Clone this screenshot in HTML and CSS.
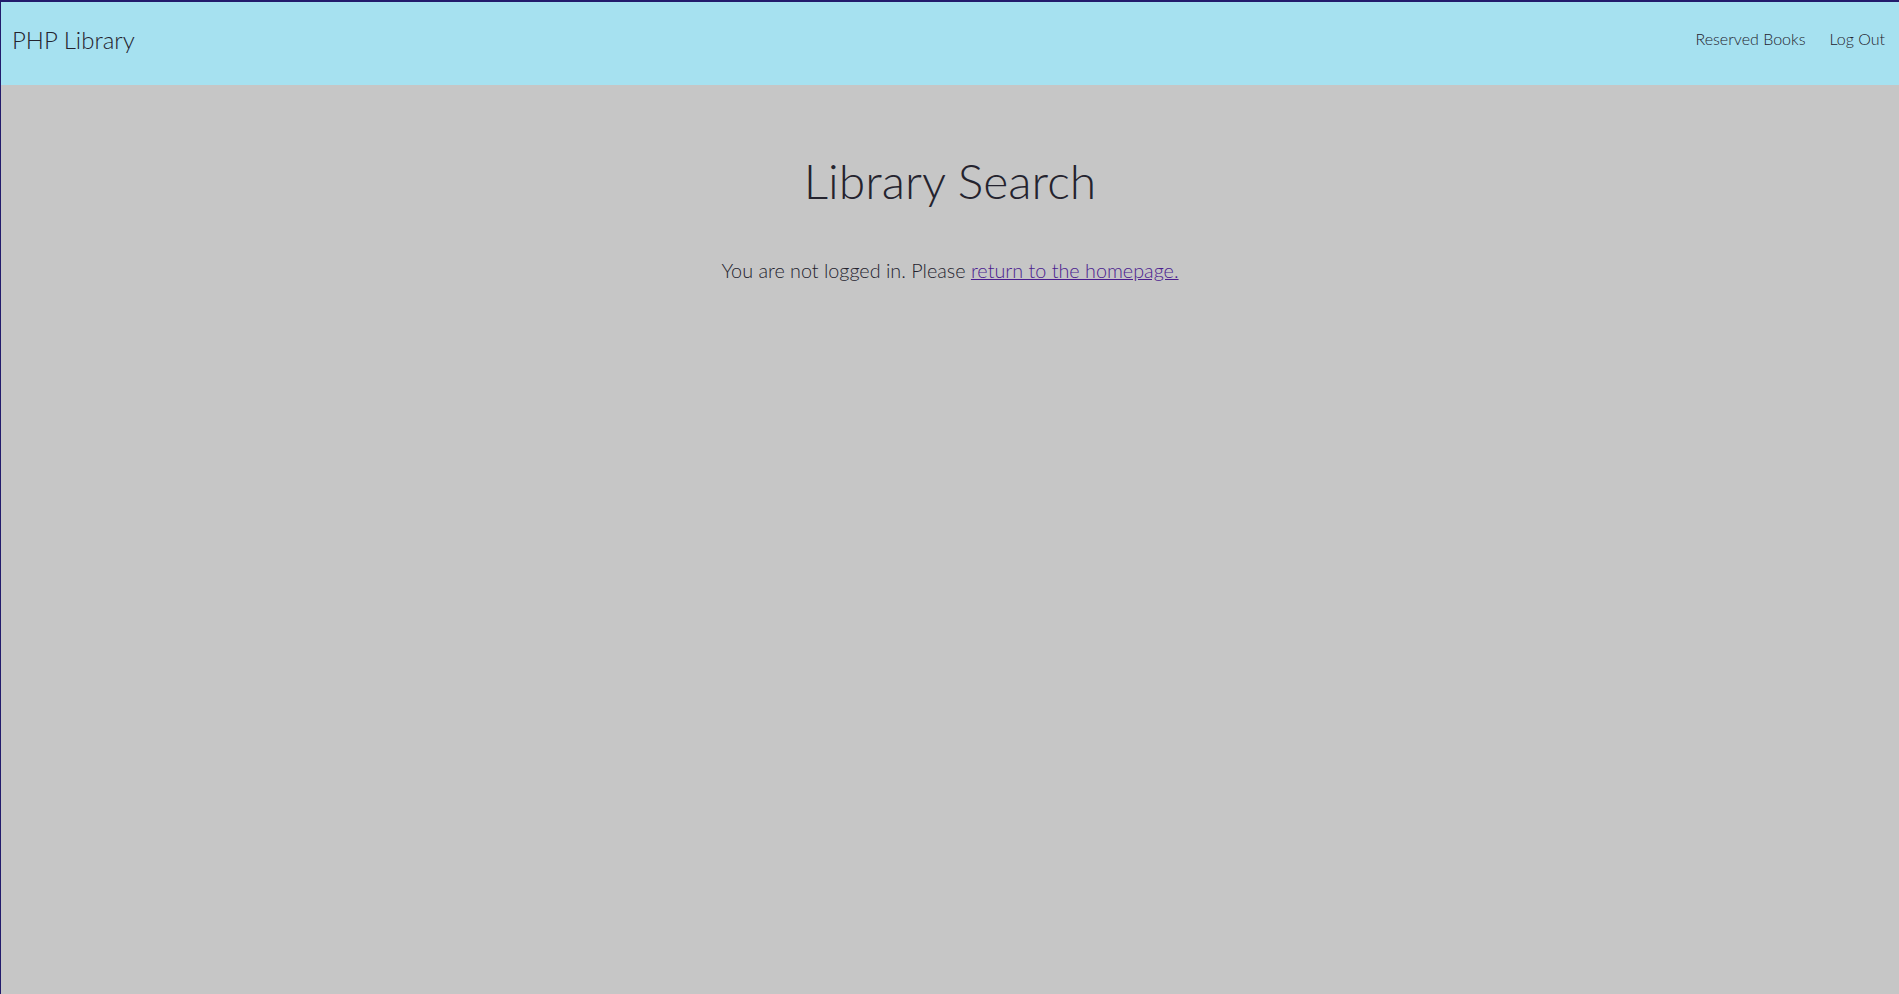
FILE: index.html
```html
<!DOCTYPE html>
<html lang="en">
<head>
<meta charset="utf-8">
<title>Library Search</title>
<link rel="stylesheet" href="styles.css">
</head>
<body>
<nav class="navbar">
  <a class="brand" href="#">PHP Library</a>
  <ul class="nav-links">
    <li><a href="#">Reserved Books</a></li>
    <li><a href="#">Log Out</a></li>
  </ul>
</nav>
<main class="content">
  <h1 class="title">Library Search</h1>
  <p class="message">You are not logged in. Please <a class="link" href="#">return to the homepage.</a></p>
</main>
</body>
</html>
```

FILE: styles.css
```css
html, body {
  height: 100%;
}
body {
  margin: 0;
  background: #c6c6c6;
  color: #24232e;
  font-family: Lato, "Noto Sans", sans-serif;
  font-weight: 300;
  border-top: 2px solid #221b6c;
  border-left: 1px solid #221b6c;
  box-sizing: border-box;
  overflow: hidden;
}
.navbar {
  height: 83px;
  box-sizing: border-box;
  background: #a6e1f0;
  display: flex;
  align-items: flex-start;
  justify-content: space-between;
  padding: 24px 14px 0 11px;
}
.brand {
  font-size: 24px;
  line-height: 1.2;
  color: #24232e;
  text-decoration: none;
}
.nav-links {
  list-style: none;
  margin: 3px 0 0;
  padding: 0;
  display: flex;
  gap: 24px;
  line-height: 1.2;
}
.nav-links a {
  font-size: 16px;
  color: #24232e;
  text-decoration: none;
}
.content {
  text-align: center;
}
.title {
  font-size: 48px;
  font-weight: 300;
  margin: 67px 0 0;
  line-height: 1.2;
}
.message {
  font-size: 19.8px;
  margin: 49px 0 0;
  line-height: 1.2;
}
.link {
  color: #4b1d8f;
  text-decoration: underline;
}
```
